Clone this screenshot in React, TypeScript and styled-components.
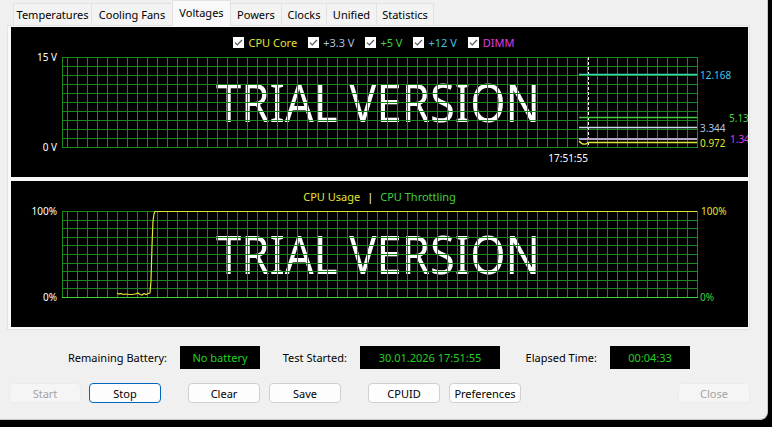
import React from 'react'
import styled, { createGlobalStyle } from 'styled-components'

const GlobalStyle = createGlobalStyle`
  html, body {
    margin: 0;
    padding: 0;
    background: #000;
  }
  body {
    font-family: 'Noto Sans', 'Liberation Sans', sans-serif;
    font-size: 11px;
    color: #000;
  }
`

const Window = styled.div`
  box-sizing: border-box;
  width: 768px;
  height: 420px;
  background: #f0f0f0;
  border-right: 1px solid #c8c8c8;
  border-bottom: 1px solid #c8c8c8;
  border-bottom-right-radius: 8px;
  display: flex;
  flex-direction: column;
`

const TabBar = styled.div`
  display: flex;
  align-items: flex-end;
  height: 25px;
  padding-left: 14px;
  position: relative;
  z-index: 1;
`

const Tab = styled.div<{ $active?: boolean; $width: number }>`
  box-sizing: border-box;
  width: ${({ $width }) => $width}px;
  height: ${({ $active }) => ($active ? 26 : 22)}px;
  margin-bottom: ${({ $active }) => ($active ? -1 : 0)}px;
  margin-left: -1px;
  padding-bottom: ${({ $active }) => ($active ? 3 : 0)}px;
  display: flex;
  align-items: center;
  justify-content: center;
  background: ${({ $active }) => ($active ? '#f9f9f9' : '#f3f3f3')};
  border: 1px solid #e2e2e2;
  border-bottom: none;
  white-space: nowrap;
`

const TabPanel = styled.div`
  box-sizing: border-box;
  margin-left: 7px;
  width: 743px;
  height: 305px;
  background: #f9f9f9;
  border: 1px solid #e3e3e3;
  padding: 1px 1px 2px 3px;
  display: flex;
  flex-direction: column;
  gap: 4px;
`

const ChartBox = styled.div<{ $height: number }>`
  position: relative;
  height: ${({ $height }) => $height}px;
  background: #000;
  overflow: hidden;
  display: flex;
  flex-direction: column;
`

const Legend = styled.div<{ $shift?: number }>`
  height: 30px;
  display: flex;
  align-items: center;
  justify-content: center;
  gap: 11px;
  padding-right: ${({ $shift = 0 }) => $shift}px;
  font-size: 11px;
`

const LegendItem = styled.span<{ $color: string }>`
  display: flex;
  align-items: center;
  gap: 4px;
  color: ${({ $color }) => $color};
`

const Box = styled.span`
  display: inline-flex;
  width: 11px;
  height: 11px;
  background: #fff;
`

const Divider = styled.span`
  color: #fff;
  margin: 0 -4px;
`

const Plot = styled.svg`
  display: block;
  overflow: visible;
  font-family: 'Noto Sans', 'Liberation Sans', sans-serif;
  font-size: 10px;
`

const StatusRow = styled.div`
  display: flex;
  align-items: center;
  height: 23px;
  margin-top: 16px;
  padding-left: 40px;
`

const StatusLabel = styled.span<{ $width: number }>`
  width: ${({ $width }) => $width}px;
  margin-right: 13px;
  text-align: right;
  white-space: nowrap;
`

const StatusValue = styled.span<{ $width: number }>`
  width: ${({ $width }) => $width}px;
  height: 23px;
  display: flex;
  align-items: center;
  justify-content: center;
  background: #000;
  color: #22d022;
`

const ButtonRow = styled.div`
  display: flex;
  height: 20px;
  margin-top: 14px;
  padding: 0 17px 0 9px;
`

const Button = styled.button<{ $gap?: number; $focused?: boolean; $push?: boolean }>`
  box-sizing: border-box;
  width: 72px;
  height: 20px;
  margin-left: ${({ $gap = 0, $push }) => ($push ? 'auto' : `${$gap}px`)};
  padding: 0;
  font-family: inherit;
  font-size: 11px;
  color: #000;
  background: #fdfdfd;
  border: 1px solid ${({ $focused }) => ($focused ? '#0067c0' : '#d0d0d0')};
  border-radius: 4px;

  &:disabled {
    color: #a3a3a3;
    background: #f5f5f5;
    border-color: #ececec;
  }
`

const GRID = '#1b881b'
const GL = 51
const GR = 686

const Grid = ({ rows, height }: { rows: number; height: number }) => {
  const xs: number[] = [GL]
  for (let x = GR; x > GL + 2; x -= 10) xs.push(x)
  const ys: number[] = []
  for (let i = 0; i <= rows; i++) ys.push((height / rows) * i)
  return (
    <g stroke={GRID} strokeWidth={1} shapeRendering="crispEdges">
      {xs.map((x) => (
        <line key={'v' + x} x1={x + 0.5} y1={0} x2={x + 0.5} y2={height} />
      ))}
      {ys.map((y) => (
        <line key={'h' + y} x1={GL} y1={Math.round(y) + 0.5} x2={GR + 1} y2={Math.round(y) + 0.5} />
      ))}
    </g>
  )
}

const Watermark = ({ y }: { y: number }) => (
  <text
    x={205}
    y={y}
    fill="#fff"
    fontSize={52}
    fontWeight={400}
    textLength={324}
    lengthAdjust="spacingAndGlyphs"
  >
    TRIAL VERSION
  </text>
)

const Check = () => (
  <Box>
    <svg width="11" height="11" viewBox="0 0 11 11">
      <path d="M2 5.6 L4.3 7.9 L9 3" fill="none" stroke="#555" strokeWidth="1.2" />
    </svg>
  </Box>
)

const voltages = [
  { name: 'CPU Core', color: '#e4e432' },
  { name: '+3.3 V', color: '#a9c1e2' },
  { name: '+5 V', color: '#3fd23f' },
  { name: '+12 V', color: '#3fc3e6' },
  { name: 'DIMM', color: '#e03ce0' },
]

const readings = [
  { y: 17.5, line: '#34dcb8', label: '12.168', color: '#40c6ee', x: 689 },
  { y: 60.5, line: '#3fcc3f', label: '5.13', color: '#3fd23f', x: 718 },
  { y: 70.5, line: '#c9d8ea', label: '3.344', color: '#b2c6e2', x: 689 },
  { y: 82, line: '#b9a6c4', label: '1.34', color: '#e03ce0', x: 719 },
  { y: 85.5, line: '#e4e432', label: '0.972', color: '#e4e432', x: 689 },
]

const usagePath =
  'M106,82 L108,83 L110,82.5 L112,83.5 L115,83 L118,83.5 L121,83.5 L124,83 L127,82 L129,83.5 L131,84 L133,82.5 L135,83.5 L137,82.5 L139,82 L140,70 L141,35 L142,10 L143,3 L144,0.5 L686,0.5'

const tabs = [
  { label: 'Temperatures', width: 79 },
  { label: 'Cooling Fans', width: 82 },
  { label: 'Voltages', width: 59 },
  { label: 'Powers', width: 52 },
  { label: 'Clocks', width: 46 },
  { label: 'Unified', width: 51 },
  { label: 'Statistics', width: 58 },
]

const VoltageChart = () => (
  <ChartBox $height={150}>
    <Legend $shift={11}>
      {voltages.map((v) => (
        <LegendItem key={v.name} $color={v.color}>
          <Check />
          {v.name}
        </LegendItem>
      ))}
    </Legend>
    <Plot width={737} height={120}>
      <Watermark y={65} />
      <Grid rows={10} height={90} />
      <g fill="#fff" textAnchor="end" dominantBaseline="central">
        <text x={46} y={0}>15 V</text>
        <text x={46} y={90}>0 V</text>
        <text x={577} y={101}>17:51:55</text>
      </g>
      <line x1={577.5} y1={0} x2={577.5} y2={88} stroke="#fff" strokeDasharray="3 2" />
      {readings.map((r) => (
        <g key={r.label}>
          <path
            d={
              r.label === '0.972'
                ? `M568,84 Q571,88 575,87 L577,${r.y} L686,${r.y}`
                : `M568,${r.y} L686,${r.y}`
            }
            fill="none"
            stroke={r.line}
            strokeWidth={r.label === '1.34' ? 2 : 1.3}
          />
          <text x={r.x} y={r.y} fill={r.color} dominantBaseline="central">
            {r.label}
          </text>
        </g>
      ))}
    </Plot>
  </ChartBox>
)

const UsageChart = () => (
  <ChartBox $height={146}>
    <Legend>
      <LegendItem $color="#e4e432">CPU Usage</LegendItem>
      <Divider>|</Divider>
      <LegendItem $color="#3fd23f">CPU Throttling</LegendItem>
    </Legend>
    <Plot width={737} height={116}>
      <Watermark y={63} />
      <Grid rows={10} height={86} />
      <line x1={GL} y1={86.5} x2={GR + 1} y2={86.5} stroke="#3fd23f" strokeWidth={1} />
      <path d={usagePath} fill="none" stroke="#e4e432" strokeWidth={1.2} />
      <g fill="#fff" textAnchor="end" dominantBaseline="central">
        <text x={46} y={0}>100%</text>
        <text x={46} y={86}>0%</text>
      </g>
      <text x={690} y={0} fill="#e4e432" dominantBaseline="central">100%</text>
      <text x={689} y={86} fill="#3fd23f" dominantBaseline="central">0%</text>
    </Plot>
  </ChartBox>
)

const App = () => (
  <>
    <GlobalStyle />
    <Window>
      <TabBar>
        {tabs.map((t) => (
          <Tab key={t.label} $width={t.width} $active={t.label === 'Voltages'}>
            {t.label}
          </Tab>
        ))}
      </TabBar>
      <TabPanel>
        <VoltageChart />
        <UsageChart />
      </TabPanel>
      <StatusRow>
        <StatusLabel $width={127}>Remaining Battery:</StatusLabel>
        <StatusValue $width={80}>No battery</StatusValue>
        <StatusLabel $width={87}>Test Started:</StatusLabel>
        <StatusValue $width={140}>30.01.2026 17:51:55</StatusValue>
        <StatusLabel $width={97}>Elapsed Time:</StatusLabel>
        <StatusValue $width={80}>00:04:33</StatusValue>
      </StatusRow>
      <ButtonRow>
        <Button disabled>Start</Button>
        <Button $gap={8} $focused>Stop</Button>
        <Button $gap={27}>Clear</Button>
        <Button $gap={9}>Save</Button>
        <Button $gap={27}>CPUID</Button>
        <Button $gap={9}>Preferences</Button>
        <Button $push disabled>Close</Button>
      </ButtonRow>
    </Window>
  </>
)

export default App
